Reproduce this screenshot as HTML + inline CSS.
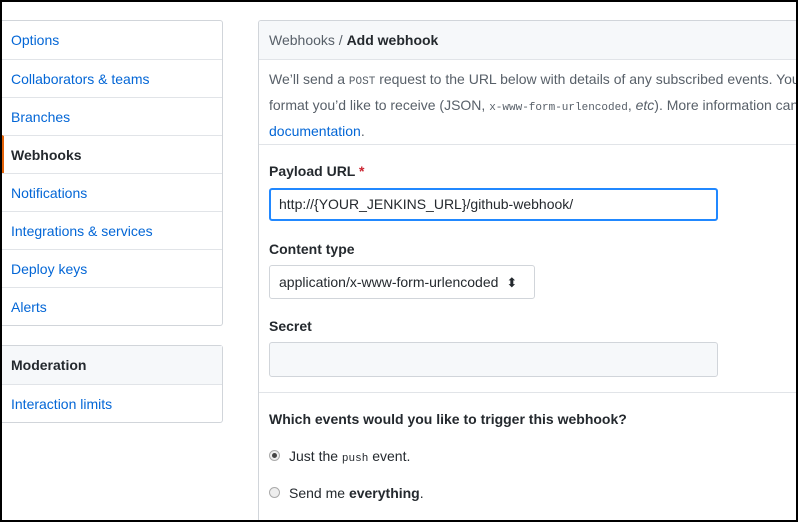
<!DOCTYPE html><html style="overflow:hidden;width:798px;height:522px"><head><style>
html,body{margin:0;width:798px;height:522px;overflow:hidden}
body{background:#fff;font-family:"Liberation Sans",sans-serif;font-size:14px;color:#24292e;position:relative}
.frame{position:absolute;left:0;top:0;width:794px;height:518px;border:2px solid #000;pointer-events:none;z-index:9}
.box{position:absolute;left:2px;width:220px;border:1px solid #d1d5da;border-left:none;border-radius:0 3px 3px 0}
.it{height:38px;line-height:38px;padding-left:9px;color:#0366d6;border-top:1px solid #e1e4e8;box-sizing:border-box}
.it:first-child{border-top:none}
.sel{color:#24292e;font-weight:bold;border-left:2px solid #e36209;padding-left:7px}
.hd{background:#f6f8fa;color:#24292e;font-weight:bold}
.main{position:absolute;left:258px;top:20px;width:539px;height:501px;border:1px solid #d1d5da;border-right:none;border-bottom:none;border-radius:3px 0 0 0;overflow:hidden}
.mh{height:38px;line-height:38px;background:#f6f8fa;border-bottom:1px solid #e1e4e8;padding-left:10px;color:#586069}
.mh b{color:#24292e}
.t{position:absolute;left:10px;white-space:nowrap}
code{font-family:"Liberation Mono",monospace;font-size:11px}
.in{position:absolute;left:10px;border:1px solid #d1d5da;border-radius:3px;box-sizing:border-box}
.radio{position:absolute;left:10px;width:11px;height:11px;border-radius:50%;border:1px solid #aaa;background:#eee;box-sizing:border-box}
</style></head><body>
<div class="frame"></div>
<div class="box" style="top:20px">
<div class="it">Options</div><div class="it">Collaborators &amp; teams</div><div class="it">Branches</div><div class="it sel">Webhooks</div><div class="it">Notifications</div><div class="it">Integrations &amp; services</div><div class="it">Deploy keys</div><div class="it">Alerts</div>
</div>
<div class="box" style="top:345px">
<div class="it hd">Moderation</div><div class="it">Interaction limits</div>
</div>
<div class="main">
<div class="mh">Webhooks / <b>Add webhook</b></div>
<div class="t" style="top:47px;color:#586069;line-height:23px">We’ll send a <code>POST</code> request to the URL below with details of any subscribed events. You can also specify which data<br>format you’d like to receive (JSON, <code>x-www-form-urlencoded</code>, <i>etc</i>). More information can be found in our developer<br><span style="color:#0366d6">documentation</span>.</div>
<div style="position:absolute;left:0;right:0;top:123px;border-top:1px solid #e1e4e8"></div>
<div class="t" style="top:142px;font-weight:bold">Payload URL <span style="color:#cb2431">*</span></div>
<div class="in" style="top:167px;width:449px;height:33px;border:2px solid #2188ff;line-height:29px;padding-left:8px">http://{YOUR_JENKINS_URL}/github-webhook/</div>
<div class="t" style="top:220px;font-weight:bold">Content type</div>
<div class="in" style="top:244px;width:266px;height:34px;line-height:32px;padding-left:9px">application/x-www-form-urlencoded <span style="font-size:13px;margin-left:4px">⬍</span></div>
<div class="t" style="top:297px;font-weight:bold">Secret</div>
<div class="in" style="top:321px;width:449px;height:35px;background:#f6f8fa"></div>
<div style="position:absolute;left:0;right:0;top:371px;border-top:1px solid #e1e4e8"></div>
<div class="t" style="top:390px;font-weight:bold">Which events would you like to trigger this webhook?</div>
<div class="radio" style="top:429px"><div style="width:5px;height:5px;background:#444;border-radius:50%;margin:2px"></div></div>
<div class="t" style="left:30px;top:427px">Just the <code>push</code> event.</div>
<div class="radio" style="top:466px"></div>
<div class="t" style="left:30px;top:464px">Send me <b>everything</b>.</div>
</div>
</body></html>
